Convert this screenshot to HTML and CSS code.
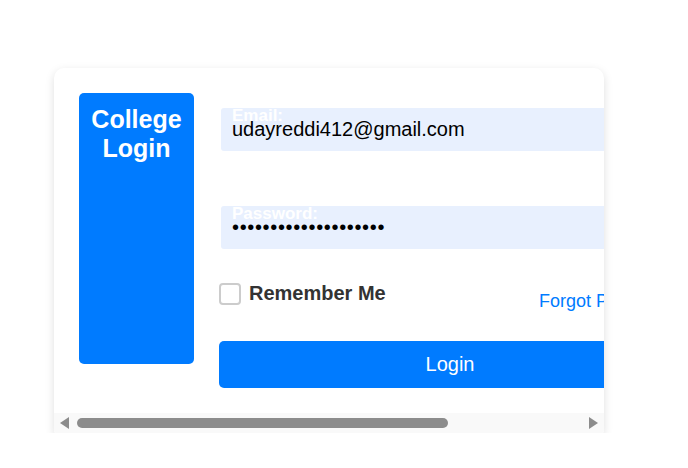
FILE: index.html
```html
<!DOCTYPE html>
<html lang="en">
<head>
<meta charset="utf-8">
<title>College Login</title>
<link rel="stylesheet" href="styles.css">
</head>
<body>
<div class="card">
  <div class="viewport">
    <div class="card-inner">
      <div class="side">
        <h2 class="side-title">College Login</h2>
      </div>
      <form class="form">
        <div class="group">
          <label class="label" for="email">Email:</label>
          <input class="input" id="email" type="text" value="udayreddi412@gmail.com">
        </div>
        <div class="group group-pass">
          <label class="label" for="password">Password:</label>
          <input class="input input-pass" id="password" type="password" value="aaaaaaaaaaaaaaaaaaaa">
        </div>
        <div class="row">
          <label class="remember"><input class="check" type="checkbox"><span>Remember Me</span></label>
          <a class="forgot" href="#">Forgot Password?</a>
        </div>
        <button class="btn" type="button">Login</button>
      </form>
    </div>
  </div>
  <div class="scrollbar">
    <svg class="arrow" width="9" height="12" viewBox="0 0 9 12"><polygon points="9,0 9,12 0,6" fill="#8c8c8c"/></svg>
    <div class="thumb"></div>
    <svg class="arrow arrow-right" width="9" height="12" viewBox="0 0 9 12"><polygon points="0,0 0,12 9,6" fill="#8c8c8c"/></svg>
  </div>
</div>
</body>
</html>
```

FILE: styles.css
```css
html, body {
  margin: 0;
  background: #ffffff;
}
body {
  padding: 68px 0 0 54px;
  font-family: "Liberation Sans", Arial, sans-serif;
}
.card {
  box-sizing: border-box;
  width: 550px;
  display: flex;
  flex-direction: column;
  background: #ffffff;
  border-radius: 10px 10px 2px 2px;
  box-shadow: 0 3px 10px rgba(0, 0, 0, 0.13);
  overflow: hidden;
}
.viewport {
  overflow: hidden;
  padding: 25px 0 0 25px;
}
.card-inner {
  display: flex;
  align-items: flex-start;
  gap: 25px;
  width: max-content;
  padding: 0 0 25px 0;
}
.side {
  box-sizing: border-box;
  width: 115px;
  height: 271px;
  background: #007bff;
  border-radius: 5px;
  padding-top: 12px;
  text-align: center;
}
.side-title {
  margin: 0;
  color: #ffffff;
  font-size: 25px;
  line-height: 29px;
  font-weight: bold;
}
.form {
  width: 466px;
  padding-top: 15px;
  margin: 0;
}
.group {
  position: relative;
}
.group-pass {
  margin-top: 55px;
}
.label {
  position: absolute;
  top: -2px;
  left: 13px;
  color: #ffffff;
  font-size: 17px;
  font-weight: bold;
  line-height: 20px;
}
.input {
  display: block;
  box-sizing: border-box;
  width: 462px;
  height: 43px;
  margin: 0 0 0 2px;
  padding: 0 11px;
  border: none;
  border-radius: 3px;
  background: #e8f0fe;
  color: #000000;
  font-family: "Liberation Sans", Arial, sans-serif;
  font-size: 20px;
  outline: none;
}
.input-pass {
  letter-spacing: 0.65px;
}
.row {
  display: flex;
  justify-content: space-between;
  align-items: flex-start;
  margin-top: 33px;
}
.remember {
  display: flex;
  align-items: center;
  gap: 8px;
  color: #333333;
  font-size: 20px;
  font-weight: bold;
  line-height: 23px;
}
.check {
  appearance: none;
  -webkit-appearance: none;
  box-sizing: border-box;
  width: 22px;
  height: 22px;
  margin: 0;
  border: 2px solid #cccccc;
  border-radius: 4px;
  background: #ffffff;
}
.forgot {
  margin-top: 9px;
  color: #007bff;
  font-size: 18px;
  line-height: 21px;
  text-decoration: none;
}
.btn {
  display: block;
  width: 462px;
  height: 47px;
  margin-top: 29px;
  border: none;
  border-radius: 5px;
  background: #007bff;
  color: #ffffff;
  font-family: "Liberation Sans", Arial, sans-serif;
  font-size: 20px;
}
.scrollbar {
  display: flex;
  align-items: center;
  height: 20px;
  padding: 0 6px 0 6px;
  background: #f9f9f9;
}
.arrow {
  display: block;
  flex: none;
}
.thumb {
  width: 371px;
  height: 10px;
  margin-left: 8px;
  border-radius: 5px;
  background: #8c8c8c;
}
.arrow-right {
  margin-left: auto;
}
```
